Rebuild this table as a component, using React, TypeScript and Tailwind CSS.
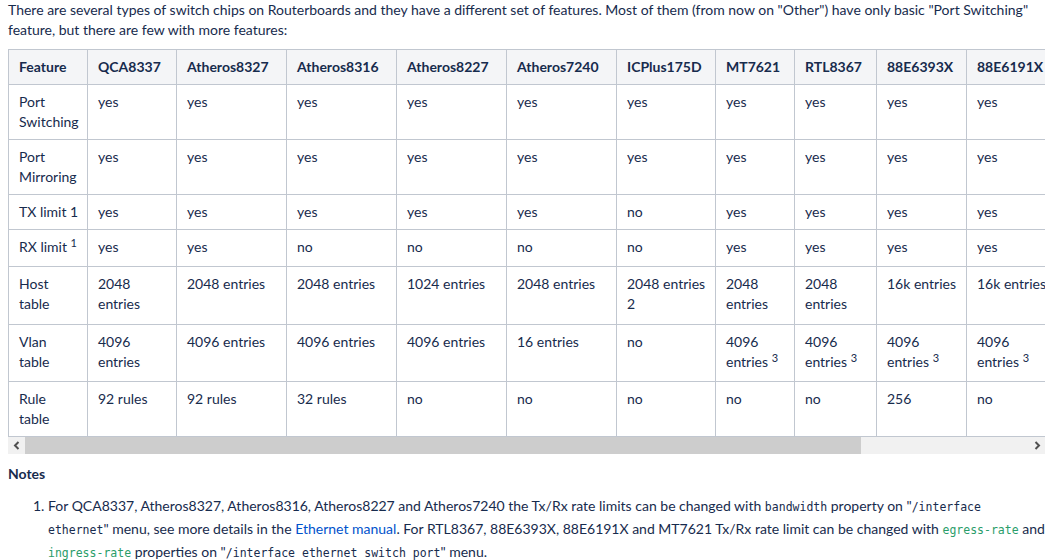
const headers = [
  "Feature",
  "QCA8337",
  "Atheros8327",
  "Atheros8316",
  "Atheros8227",
  "Atheros7240",
  "ICPlus175D",
  "MT7621",
  "RTL8367",
  "88E6393X",
  "88E6191X",
];

const widths = [79, 89, 110, 110, 110, 110, 99, 79, 82, 90, 90];

const sup = (n: string) => <sup className="text-[11px] leading-none">{n}</sup>;

type Row = { h: string; label: React.ReactNode; cells: React.ReactNode[] };

const rows: Row[] = [
  {
    h: "h-[55px]",
    label: <>Port<br />Switching</>,
    cells: ["yes", "yes", "yes", "yes", "yes", "yes", "yes", "yes", "yes", "yes"],
  },
  {
    h: "h-[55px]",
    label: <>Port<br />Mirroring</>,
    cells: ["yes", "yes", "yes", "yes", "yes", "yes", "yes", "yes", "yes", "yes"],
  },
  {
    h: "h-[35px]",
    label: <>TX limit 1</>,
    cells: ["yes", "yes", "yes", "yes", "yes", "no", "yes", "yes", "yes", "yes"],
  },
  {
    h: "h-[37px]",
    label: <>RX limit {sup("1")}</>,
    cells: ["yes", "yes", "no", "no", "no", "no", "yes", "yes", "yes", "yes"],
  },
  {
    h: "h-[58px]",
    label: <>Host<br />table</>,
    cells: [
      "2048 entries",
      "2048 entries",
      "2048 entries",
      "1024 entries",
      "2048 entries",
      <>2048 entries<br />2</>,
      "2048 entries",
      "2048 entries",
      "16k entries",
      "16k entries",
    ],
  },
  {
    h: "h-[57px]",
    label: <>Vlan<br />table</>,
    cells: [
      "4096 entries",
      "4096 entries",
      "4096 entries",
      "4096 entries",
      "16 entries",
      "no",
      <>4096<br />entries {sup("3")}</>,
      <>4096<br />entries {sup("3")}</>,
      <>4096<br />entries {sup("3")}</>,
      <>4096<br />entries {sup("3")}</>,
    ],
  },
  {
    h: "h-[55px]",
    label: <>Rule<br />table</>,
    cells: ["92 rules", "92 rules", "32 rules", "no", "no", "no", "no", "no", "256", "no"],
  },
];

const cell = "border border-[#c1c7d0] pl-[10px] pr-[6px] py-[7px] align-top";

function Code({ children, green }: { children: React.ReactNode; green?: boolean }) {
  return (
    <code
      className={
        "font-['DejaVu_Sans_Mono',monospace] text-[11.5px] " +
        (green ? "whitespace-nowrap text-[#2a9d6a]" : "text-[#172b4d]")
      }
    >
      {children}
    </code>
  );
}

export default function App() {
  return (
    <div className="w-[1062px] h-[560px] overflow-hidden bg-white px-2 text-[14px] leading-[20px] text-[#172b4d] font-['Lato',sans-serif]">
      <p className="mb-[9px]">
        There are several types of switch chips on Routerboards and they have a different set of features. Most of
        them (from now on "Other") have only basic "Port Switching" feature, but there are few with more features:
      </p>

      <div className="w-[1037px]">
        <div className="overflow-hidden">
          <table className="table-fixed border-collapse w-[1048px]">
            <colgroup>
              {widths.map((w, i) => (
                <col key={i} style={{ width: w }} />
              ))}
            </colgroup>
            <thead>
              <tr className="h-[35px]">
                {headers.map((h) => (
                  <th
                    key={h}
                    className="border border-[#c1c7d0] bg-[#f4f5f7] pl-[10px] pr-[4px] py-[7px] text-left font-bold whitespace-nowrap"
                  >
                    {h}
                  </th>
                ))}
              </tr>
            </thead>
            <tbody>
              {rows.map((r, i) => (
                <tr key={i} className={r.h}>
                  <td className={cell + " whitespace-nowrap"}>{r.label}</td>
                  {r.cells.map((c, j) => (
                    <td key={j} className={cell}>
                      {c}
                    </td>
                  ))}
                </tr>
              ))}
            </tbody>
          </table>
        </div>

        <div className="flex h-[17px] bg-[#f1f1f1]">
          <div className="flex w-[17px] items-center justify-center text-[#505050]">
            <svg width="8" height="9" viewBox="0 0 8 9">
              <path d="M5.5 1 L2 4.5 L5.5 8" fill="none" stroke="currentColor" strokeWidth="2" />
            </svg>
          </div>
          <div className="w-[836px] bg-[#cdcdcd]" />
          <div className="flex-1" />
          <div className="flex w-[17px] items-center justify-center text-[#505050]">
            <svg width="8" height="9" viewBox="0 0 8 9">
              <path d="M2.5 1 L6 4.5 L2.5 8" fill="none" stroke="currentColor" strokeWidth="2" />
            </svg>
          </div>
        </div>
      </div>

      <h3 className="mt-[10px] font-bold">Notes</h3>

      <ol className="mt-[11px] w-[1050px] list-decimal pl-[40px] leading-[21px]">
        <li>
          For QCA8337, Atheros8327, Atheros8316, Atheros8227 and Atheros7240 the Tx/Rx rate limits can be changed with{" "}
          <Code>bandwidth</Code> property on "<Code>/interface</Code>
          <br />
          <Code>ethernet</Code>" menu, see more details in the <a className="text-[#0052cc]">Ethernet manual</a>. For
          RTL8367, 88E6393X, 88E6191X and MT7621 Tx/Rx rate limit can be changed with <Code green>egress-rate</Code>{" "}
          and
          <br />
          <Code green>ingress-rate</Code> properties on "<Code>/interface ethernet switch port</Code>" menu.
        </li>
      </ol>
    </div>
  );
}
